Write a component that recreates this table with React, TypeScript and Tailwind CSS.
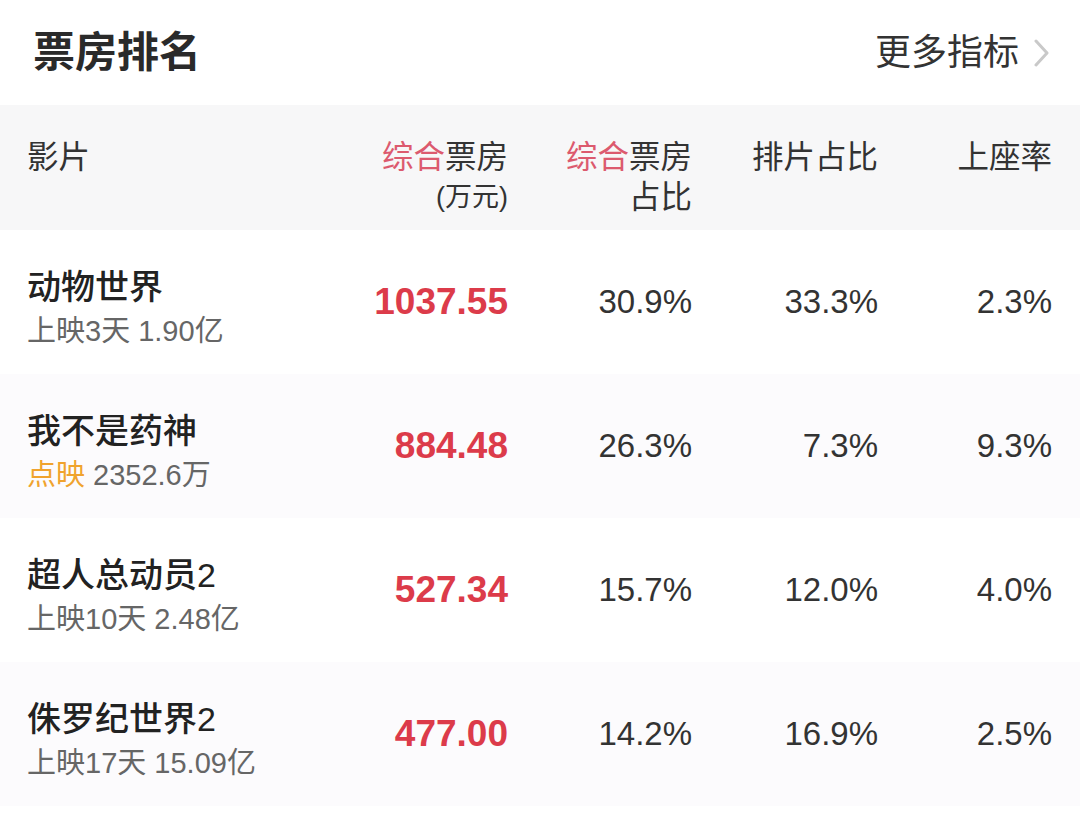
import React from "react";

interface Movie {
  name: string;
  tag?: string;
  info: string;
  boxOffice: string;
  boxShare: string;
  showShare: string;
  seatRate: string;
}

const movies: Movie[] = [
  { name: "动物世界", info: "上映3天 1.90亿", boxOffice: "1037.55", boxShare: "30.9%", showShare: "33.3%", seatRate: "2.3%" },
  { name: "我不是药神", tag: "点映", info: "2352.6万", boxOffice: "884.48", boxShare: "26.3%", showShare: "7.3%", seatRate: "9.3%" },
  { name: "超人总动员2", info: "上映10天 2.48亿", boxOffice: "527.34", boxShare: "15.7%", showShare: "12.0%", seatRate: "4.0%" },
  { name: "侏罗纪世界2", info: "上映17天 15.09亿", boxOffice: "477.00", boxShare: "14.2%", showShare: "16.9%", seatRate: "2.5%" },
];

const cols = "grid grid-cols-[1fr_184px_184px_186px_174px] pl-[27px] pr-[28px]";

export default function App() {
  return (
    <div className="w-[1080px] min-h-[823px] bg-white text-[#333] font-['Liberation_Sans','Noto_Sans_CJK_SC',sans-serif]">
      {/* title bar */}
      <div className="flex h-[105px] items-center justify-between pl-[33px] pr-[30px]">
        <h1 className="text-[42px] font-bold leading-none text-[#2a2a2a]">票房排名</h1>
        <div className="flex items-center">
          <span className="text-[36px] leading-none text-[#333]">更多指标</span>
          <svg width="16" height="28" viewBox="0 0 16 28" className="ml-[15px]">
            <path d="M2 2 L13 14 L2 26" fill="none" stroke="#c9c9c9" strokeWidth="3" strokeLinecap="round" strokeLinejoin="round" />
          </svg>
        </div>
      </div>

      {/* header */}
      <div className={`${cols} h-[125px] items-start bg-[#f7f7f8] pt-[32px] text-[31.5px] leading-[40px] text-[#333]`}>
        <div>影片</div>
        <div className="text-right">
          <span className="text-[#dc5a6e]">综合</span>票房
          <div className="text-[27px]">(万元)</div>
        </div>
        <div className="text-right">
          <span className="text-[#dc5a6e]">综合</span>票房
          <div>占比</div>
        </div>
        <div className="text-right">排片占比</div>
        <div className="text-right">上座率</div>
      </div>

      {/* rows */}
      {movies.map((m, i) => (
        <div
          key={m.name}
          className={`${cols} h-[144px] items-center ${i % 2 === 1 ? "bg-[#fcfbfd]" : "bg-white"}`}
        >
          <div className="pt-[14px]">
            <div className="text-[34px] font-medium leading-[44px] text-[#222]">{m.name}</div>
            <div className="text-[29px] leading-[44px] text-[#666]">
              {m.tag && <span className="mr-[8px] text-[#f0a32e]">{m.tag}</span>}
              {m.info}
            </div>
          </div>
          <div className="text-right text-[37px] font-bold text-[#dc3b4a]">{m.boxOffice}</div>
          <div className="text-right text-[33px]">{m.boxShare}</div>
          <div className="text-right text-[33px]">{m.showShare}</div>
          <div className="text-right text-[33px]">{m.seatRate}</div>
        </div>
      ))}
    </div>
  );
}
